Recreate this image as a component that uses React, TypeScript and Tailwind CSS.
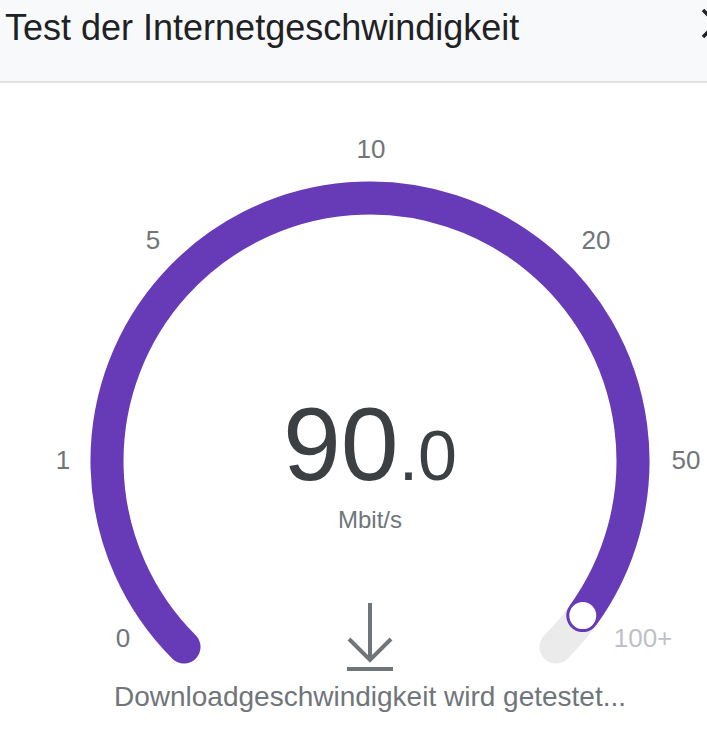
import React from 'react';

const CX = 370;
const CY = 380;
const R = 263;

function pt(deg: number) {
  const a = (deg * Math.PI) / 180;
  return [CX + R * Math.cos(a), CY + R * Math.sin(a)];
}

const LABELS = [
  { t: '0', x: 123, y: 557, dim: false },
  { t: '1', x: 63, y: 379, dim: false },
  { t: '5', x: 153, y: 159, dim: false },
  { t: '10', x: 371, y: 68, dim: false },
  { t: '20', x: 596, y: 159, dim: false },
  { t: '50', x: 686, y: 379, dim: false },
  { t: '100+', x: 643, y: 557, dim: true },
];

function Gauge({ value }: { value: number }) {
  const [sx, sy] = pt(135);
  const [ex, ey] = pt(45);
  const [kx, ky] = pt(value);
  return (
    <svg className="absolute inset-0" width="707" height="657" viewBox="0 0 707 657">
      {/* track */}
      <path
        d={`M ${sx} ${sy} A ${R} ${R} 0 1 1 ${ex} ${ey}`}
        fill="none"
        stroke="#ebebeb"
        strokeWidth="33"
        strokeLinecap="round"
      />
      {/* progress */}
      <path
        d={`M ${sx} ${sy} A ${R} ${R} 0 1 1 ${kx} ${ky}`}
        fill="none"
        stroke="#673ab7"
        strokeWidth="33"
        strokeLinecap="round"
      />
      <circle cx={kx} cy={ky} r="14.5" fill="#fff" stroke="#673ab7" strokeWidth="2" />
    </svg>
  );
}

export default function App() {
  return (
    <div className="w-[707px] h-[738px] overflow-hidden bg-white font-['Liberation_Sans',Arial,sans-serif]">
      {/* Header */}
      <div className="relative h-[83px] bg-[#f8f9fa] border-b-2 border-[#e3e3e3] overflow-hidden">
        <h1 className="pl-[5px] pt-[10px] text-[36px] leading-[36px] text-[#202124] font-normal">
          Test der Internetgeschwindigkeit
        </h1>
        <svg className="absolute left-[701px] top-[9px]" width="30" height="30" viewBox="0 0 30 30">
          <path d="M2 1 L29 28 M29 1 L2 28" stroke="#202124" strokeWidth="3.5" />
        </svg>
      </div>

      {/* Gauge */}
      <div className="relative h-[655px] -mt-[2px]">
        <Gauge value={36} />
        {LABELS.map((l) => (
          <div
            key={l.t}
            className={`absolute -translate-x-1/2 -translate-y-1/2 text-[26px] leading-none ${
              l.dim ? 'text-[#bdc1c6]' : 'text-[#70757a]'
            }`}
            style={{ left: l.x, top: l.y }}
          >
            {l.t}
          </div>
        ))}

        <div className="relative flex flex-col items-center pl-[33px] pt-[311px]">
          <div className="text-[104px] leading-[104px] text-[#3c4043]">
            90<span className="text-[70px]">.0</span>
          </div>
          <div className="mt-[0px] text-[24px] leading-[24px] text-[#70757a]">Mbit/s</div>
          <svg className="mt-[69px]" width="50" height="72" viewBox="0 0 50 72">
            <path d="M25 2 V58 M4 38 L25 59 L46 38 M2 68 H48" fill="none" stroke="#70757a" strokeWidth="4" />
          </svg>
          <div className="mt-[10px] text-[28px] leading-[28px] text-[#70757a] whitespace-nowrap">
            Downloadgeschwindigkeit wird getestet...
          </div>
        </div>
      </div>
    </div>
  );
}
